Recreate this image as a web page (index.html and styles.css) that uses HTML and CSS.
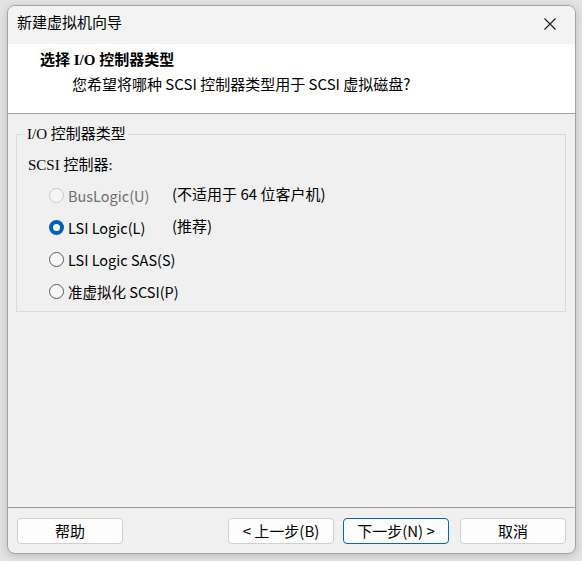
FILE: index.html
```html
<!DOCTYPE html>
<html lang="zh-CN">
<head>
<meta charset="utf-8">
<title>新建虚拟机向导</title>
<link rel="stylesheet" href="styles.css">
</head>
<body>
<div class="window">
  <div class="titlebar">
    <span class="title">新建虚拟机向导</span>
    <span class="close">
      <svg width="12" height="12" viewBox="0 0 12 12"><path d="M0.5 0.5 L11.5 11.5 M11.5 0.5 L0.5 11.5" stroke="#1a1a1a" stroke-width="1.1" fill="none"/></svg>
    </span>
  </div>
  <div class="header">
    <div class="h-title">选择 I/O 控制器类型</div>
    <div class="h-sub">您希望将哪种 SCSI 控制器类型用于 SCSI 虚拟磁盘?</div>
  </div>
  <div class="content">
    <fieldset class="group">
      <legend class="legend">I/O 控制器类型</legend>
      <div class="sublabel">SCSI 控制器:</div>
      <div class="options">
        <div class="row">
          <span class="radio disabled"></span>
          <span class="opt disabled-text">BusLogic(U)</span>
          <span class="note">(不适用于 64 位客户机)</span>
        </div>
        <div class="row">
          <span class="radio checked"></span>
          <span class="opt">LSI Logic(L)</span>
          <span class="note">(推荐)</span>
        </div>
        <div class="row">
          <span class="radio"></span>
          <span class="opt">LSI Logic SAS(S)</span>
        </div>
        <div class="row">
          <span class="radio"></span>
          <span class="opt">准虚拟化 SCSI(P)</span>
        </div>
      </div>
    </fieldset>
  </div>
  <div class="footer">
    <button class="btn">帮助</button>
    <span class="spacer"></span>
    <button class="btn">&lt; 上一步(B)</button>
    <button class="btn default">下一步(N) &gt;</button>
    <button class="btn last">取消</button>
  </div>
</div>
</body>
</html>
```
FILE: styles.css
```css
html, body {
  margin: 0;
  padding: 0;
}
body {
  width: 582px;
  height: 561px;
  overflow: hidden;
  background: #e4e4e4;
  font-family: "Noto Sans CJK SC", "Noto Sans", sans-serif;
  color: #000;
}
.window {
  box-sizing: border-box;
  margin: 5px 0 0 7px;
  width: 569px;
  height: 549px;
  border: 1px solid #a3a3a3;
  border-radius: 8px;
  overflow: hidden;
  display: flex;
  flex-direction: column;
  background: #f0f0f0;
  box-shadow: 0 2px 10px rgba(0,0,0,0.18);
}
.titlebar {
  height: 38px;
  flex: none;
  background: #f3f3f3;
  display: flex;
  align-items: center;
  padding-left: 9px;
  padding-bottom: 6px;
  box-sizing: border-box;
}
.title {
  font-size: 15px;
  line-height: 20px;
  flex: 1;
}
.close {
  width: 46px;
  display: flex;
  justify-content: center;
  padding-right: 2px;
  padding-top: 3px;
}
.header {
  flex: none;
  height: 70px;
  background: #fff;
  border-bottom: 1px solid #a0a0a0;
  box-sizing: border-box;
  padding: 6px 0 0 32px;
}
.h-title {
  font-size: 15px;
  font-weight: 700;
  line-height: 20px;
  font-family: "Liberation Serif", "Noto Sans CJK SC", serif;
}
.h-sub {
  font-size: 15px;
  line-height: 20px;
  margin: 4px 0 0 32px;
}
.content {
  flex: 1;
  padding: 10px 8px 0 8px;
}
.group {
  margin: 0;
  border: 1px solid #dadada;
  padding: 0 0 4px 11px;
  width: 550px;
  box-sizing: border-box;
}
.legend {
  font-size: 15px;
  line-height: 20px;
  padding: 0 2px;
  margin-left: -3px;
  font-family: "Liberation Serif", "Noto Sans CJK SC", serif;
}
.sublabel {
  font-size: 15px;
  line-height: 20px;
  margin-top: 11px;
  font-family: "Liberation Serif", "Noto Sans CJK SC", serif;
}
.options {
  margin-top: 4px;
  padding-left: 21px;
}
.row {
  display: flex;
  align-items: center;
  height: 32px;
  font-size: 14px;
  white-space: nowrap;
}
.radio {
  box-sizing: border-box;
  width: 15px;
  height: 15px;
  border-radius: 50%;
  border: 1px solid #5c5c5c;
  background: #f6f6f6;
  flex: none;
  position: relative;
}
.radio.disabled {
  border-color: #c8c8c8;
  background: #f5f5f5;
}
.radio.checked {
  border: none;
  background: #005fb8;
}
.radio.checked::after {
  content: "";
  position: absolute;
  left: 4px;
  top: 4px;
  width: 7px;
  height: 7px;
  border-radius: 50%;
  background: #fff;
}
.opt {
  margin-left: 4px;
  min-width: 104px;
  flex: none;
  font-size: 14.5px;
}
.disabled-text {
  color: #6e6e6e;
}
.note {
  margin-top: -3px;
  font-size: 15px;
}
.footer {
  flex: none;
  height: 46px;
  box-sizing: border-box;
  border-top: 1px solid #a0a0a0;
  display: flex;
  align-items: flex-start;
  padding: 10px 9px 0 9px;
}
.spacer {
  flex: 1;
}
.btn {
  box-sizing: border-box;
  width: 106px;
  height: 26px;
  background: #fdfdfd;
  border: 1px solid #d0d0d0;
  border-radius: 4px;
  font-family: "Noto Sans CJK SC", "Noto Sans", sans-serif;
  font-size: 15px;
  line-height: 20px;
  color: #000;
  padding: 0;
  margin-left: 9px;
}
.btn:first-child {
  margin-left: 0;
}
.btn.default {
  border-color: #0067c0;
}
.btn.last {
  margin-left: 11px;
}
```
